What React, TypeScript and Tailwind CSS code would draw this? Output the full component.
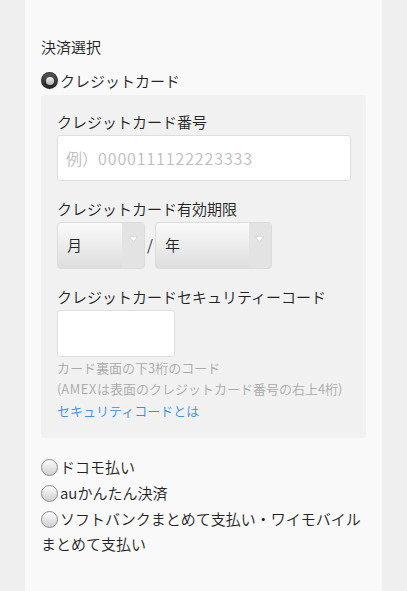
import React from 'react';

const font = { fontFamily: '"Noto Sans CJK JP", "Noto Sans", sans-serif' };

function Radio({ checked }: { checked?: boolean }) {
  if (checked) {
    return (
      <span className="flex h-[17px] w-[17px] shrink-0 items-center justify-center rounded-full bg-gradient-to-b from-[#5a5a5a] to-[#222] shadow-[inset_0_1px_1px_rgba(0,0,0,0.4)]">
        <span className="h-[8px] w-[8px] rounded-full bg-gradient-to-b from-[#eee] to-[#b5b5b5]" />
      </span>
    );
  }
  return (
    <span className="block h-[17px] w-[17px] shrink-0 rounded-full border border-[#8a8a8a] bg-gradient-to-b from-[#fdfdfd] to-[#cfcfcf]" />
  );
}

function Select({ label, width }: { label: string; width: string }) {
  return (
    <div className={`flex h-[47px] overflow-hidden rounded-[4px] border border-[#dcdcdc] bg-gradient-to-b from-[#fafafa] to-[#dedede] ${width}`}>
      <span className="flex flex-1 items-center pl-[9px] text-[15px] text-[#222]">{label}</span>
      <span className="flex w-[22px] justify-center bg-[#e3e3e3] pt-[13px]">
        <svg width="9" height="7" viewBox="0 0 9 7">
          <path d="M0.5 0.5 L8.5 0.5 L4.5 6.5 Z" fill="#fff" stroke="#d0d0d0" strokeWidth="0.8" />
        </svg>
      </span>
    </div>
  );
}

export default function App() {
  return (
    <div className="min-h-[591px] bg-[#efefef] font-[350]" style={font}>
      <div className="mx-[25px] min-h-[591px] w-[357px] bg-[#f9f9f9] px-[16px] pt-[36px]">
        {/* payment select */}
        <h2 className="text-[15px] leading-[22px] text-[#222]">決済選択</h2>
        <label className="mt-[14px] flex items-center gap-[2px] text-[15px] leading-[17px] text-[#222]">
          <Radio checked /> クレジットカード
        </label>

        {/* credit card panel */}
        <div className="mt-[6px] rounded-[4px] bg-[#f1f1f1] px-[16px] pb-[17px] pt-[16px]">
          <p className="text-[15px] leading-[22px] text-[#222]">クレジットカード番号</p>
          <div className="mt-[2px] flex h-[46px] w-[294px] items-center rounded-[3px] border border-[#dedede] bg-white px-[8px] text-[16px] text-[#bdbdbd]">
            例）<span className="tracking-[0.9px]">0000111122223333</span>
          </div>

          <p className="mt-[17px] text-[15px] leading-[22px] text-[#222]">クレジットカード有効期限</p>
          <div className="mt-[2px] flex items-center">
            <Select label="月" width="w-[88px]" />
            <span className="mx-[2px] text-[15px] text-[#222]">/</span>
            <Select label="年" width="w-[117px]" />
          </div>

          <p className="mt-[17px] text-[15px] leading-[22px] text-[#222]">クレジットカードセキュリティーコード</p>
          <div className="mt-[2px] h-[47px] w-[118px] rounded-[3px] border border-[#dedede] bg-white" />
          <p className="text-[13px] leading-[21px] text-[#a9a9a9]">カード裏面の下3桁のコード</p>
          <p className="text-[13px] leading-[22px] text-[#a9a9a9]">
            (<span className="tracking-[0.6px]">AMEX</span>は表面のクレジットカード番号の右上4桁)
          </p>
          <a href="#" className="block text-[13px] leading-[21px] text-[#3a8ee6]">セキュリティコードとは</a>
        </div>

        {/* other methods */}
        <div className="mt-[16px] flex flex-col text-[15px] text-[#222]">
          <label className="flex h-[26px] items-center gap-[2px]">
            <Radio /> ドコモ払い
          </label>
          <label className="flex h-[26px] items-center gap-[2px]">
            <Radio /> auかんたん決済
          </label>
          <label className="block leading-[25px]">
            <span className="mr-[2px] inline-block align-[-3px]">
              <Radio />
            </span>
            ソフトバンクまとめて支払い・ワイモバイル
            <br />
            まとめて支払い
          </label>
        </div>
      </div>
    </div>
  );
}
